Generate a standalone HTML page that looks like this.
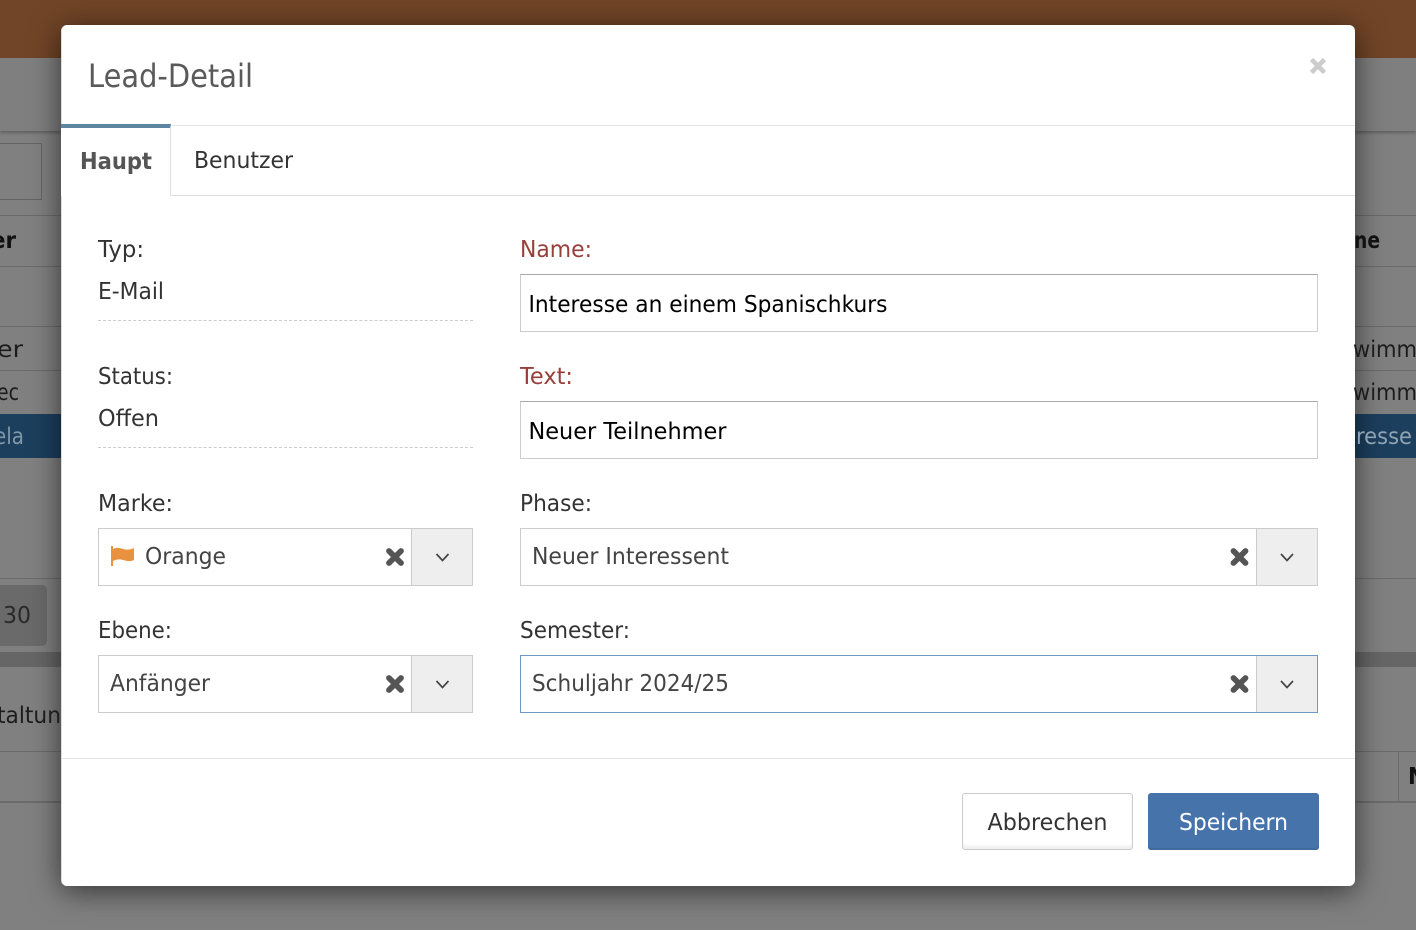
<!DOCTYPE html>
<html lang="de">
<head>
<meta charset="utf-8">
<title>Lead-Detail</title>
<style>
html,body{margin:0;padding:0;width:1416px;height:930px;overflow:hidden;background:#808080}
body{position:relative;font-family:"DejaVu Sans","Liberation Sans",sans-serif}
.a{position:absolute;box-sizing:border-box}
.bgl{position:absolute;height:1px;background:#6b6b6b}
#modal{left:61px;top:25px;width:1294px;height:861px;background:#fff;border-radius:6px;box-shadow:0 5px 30px rgba(0,0,0,.6);border-left:1px solid #ddd}
.in{background:#fff;border:1px solid #ccc;border-top-color:#a9a9a9}
.sel{background:#fff;border:1px solid #ccc}
.arr{background:#eee;border-left:1px solid #ccc}
svg#t{position:absolute;left:0;top:0}
svg#t text{font-family:"DejaVu Sans","Liberation Sans",sans-serif;font-size:23.5px;fill:#333;dominant-baseline:alphabetic}
</style>
</head>
<body>
<div class="a" style="left:0;top:0;width:1416px;height:58px;background:#714527"></div>
<div class="a" style="left:0;top:58px;width:1416px;height:73px;background:#7f7f7f;box-shadow:0 2px 3px rgba(0,0,0,.25)"></div>
<div class="a" style="left:-5px;top:143px;width:47px;height:57px;border:1px solid #646464"></div>
<div class="bgl" style="left:0;top:215px;width:1416px"></div>
<div class="bgl" style="left:0;top:266px;width:1416px"></div>
<div class="bgl" style="left:0;top:326px;width:1416px"></div>
<div class="bgl" style="left:0;top:370px;width:1416px"></div>
<div class="a" style="left:0;top:414px;width:1416px;height:44px;background:#1c3f5e"></div>
<div class="bgl" style="left:0;top:578px;width:1416px"></div>
<div class="a" style="left:-8px;top:585px;width:55px;height:61px;background:#6a6a6a;border-radius:5px"></div>
<div class="a" style="left:0;top:652px;width:1416px;height:15px;background:#666"></div>
<div class="bgl" style="left:0;top:751px;width:1416px"></div>
<div class="a" style="left:0;top:801px;width:1416px;height:2px;background:#6b6b6b"></div>
<div class="a" style="left:1398px;top:751px;width:1px;height:50px;background:#6b6b6b"></div>

<div class="a" id="modal"></div>

<div class="a" style="left:62px;top:125px;width:1293px;height:1px;background:#e5e5e5"></div>
<div class="a" style="left:62px;top:195px;width:1293px;height:1px;background:#ddd"></div>
<div class="a" style="left:61px;top:124px;width:110px;height:72px;background:#fff;border-top:4px solid #5d87a0;border-right:1px solid #ddd"></div>
<div class="a" style="left:62px;top:758px;width:1293px;height:1px;background:#e5e5e5"></div>

<div class="a" style="left:98px;top:320px;width:375px;border-top:1px dashed #ccc"></div>
<div class="a" style="left:98px;top:447px;width:375px;border-top:1px dashed #ccc"></div>

<div class="a in" style="left:520px;top:274px;width:798px;height:58px"></div>
<div class="a in" style="left:520px;top:401px;width:798px;height:58px"></div>

<div class="a sel" style="left:98px;top:528px;width:375px;height:58px"></div>
<div class="a arr" style="left:411px;top:529px;width:61px;height:56px"></div>
<div class="a sel" style="left:98px;top:655px;width:375px;height:58px"></div>
<div class="a arr" style="left:411px;top:656px;width:61px;height:56px"></div>
<div class="a sel" style="left:520px;top:528px;width:798px;height:58px"></div>
<div class="a arr" style="left:1256px;top:529px;width:61px;height:56px"></div>
<div class="a sel" style="left:520px;top:655px;width:798px;height:58px;border-color:#6b9ac4"></div>
<div class="a arr" style="left:1256px;top:656px;width:61px;height:56px"></div>

<div class="a" style="left:962px;top:793px;width:171px;height:57px;background:#fff;border:1px solid #ccc;border-radius:3px;box-shadow:inset 0 -4px 3px -1px #eee"></div>
<div class="a" style="left:1148px;top:793px;width:171px;height:57px;background:#4673a9;border-radius:3px;box-shadow:inset 0 -2px 0 #3f6a9e"></div>

<svg id="t" width="1416" height="930" viewBox="0 0 1416 930" xmlns="http://www.w3.org/2000/svg">
  <!-- background text -->
  <g>
    <text x="-9" y="248" textLength="25" lengthAdjust="spacingAndGlyphs" style="fill:#111;font-weight:bold">er</text>
    <text x="-3" y="357" textLength="26" lengthAdjust="spacingAndGlyphs" style="fill:#1c1c1c">er</text>
    <text x="-3" y="400" textLength="22" lengthAdjust="spacingAndGlyphs" style="fill:#1c1c1c">ec</text>
    <text x="-6" y="444" textLength="30" lengthAdjust="spacingAndGlyphs" style="fill:#7f97a8">ela</text>
    <text x="3" y="623" textLength="28" lengthAdjust="spacingAndGlyphs" style="fill:#2a2a2a">30</text>
    <text x="-3" y="723" textLength="64" lengthAdjust="spacingAndGlyphs" style="fill:#1c1c1c">taltun</text>
    <text x="1354" y="248" textLength="26" lengthAdjust="spacingAndGlyphs" style="fill:#111;font-weight:bold">ne</text>
    <text x="1353" y="357" textLength="64" lengthAdjust="spacingAndGlyphs" style="fill:#1c1c1c">wimm</text>
    <text x="1353" y="400" textLength="64" lengthAdjust="spacingAndGlyphs" style="fill:#1c1c1c">wimm</text>
    <text x="1356" y="444" textLength="56" lengthAdjust="spacingAndGlyphs" style="fill:#8fa3b3">resse</text>
    <text x="1408" y="784" textLength="18" lengthAdjust="spacingAndGlyphs" style="fill:#111;font-weight:bold">N</text>
  </g>

  <!-- modal text -->
  <text x="88" y="87" textLength="165" lengthAdjust="spacingAndGlyphs" style="font-size:32px;fill:#5a5a5a">Lead-Detail</text>
  <path d="M1311.500 59.500L1324.500 72.500M1324.500 59.500L1311.500 72.500" stroke="#ccc" stroke-width="4.6" fill="none"/>

  <text x="80" y="169" textLength="72" lengthAdjust="spacingAndGlyphs" style="font-weight:bold;fill:#555">Haupt</text>
  <text x="194" y="168" textLength="99" lengthAdjust="spacingAndGlyphs">Benutzer</text>

  <text x="98" y="257" textLength="46" lengthAdjust="spacingAndGlyphs">Typ:</text>
  <text x="98" y="299" textLength="66" lengthAdjust="spacingAndGlyphs">E-Mail</text>
  <text x="98" y="384" textLength="75" lengthAdjust="spacingAndGlyphs">Status:</text>
  <text x="98" y="426" textLength="61" lengthAdjust="spacingAndGlyphs">Offen</text>
  <text x="98" y="511" textLength="75" lengthAdjust="spacingAndGlyphs">Marke:</text>
  <text x="98" y="638" textLength="74" lengthAdjust="spacingAndGlyphs">Ebene:</text>

  <text x="520" y="257" textLength="72" lengthAdjust="spacingAndGlyphs" style="fill:#973f3a">Name:</text>
  <text x="520" y="384" textLength="53" lengthAdjust="spacingAndGlyphs" style="fill:#973f3a">Text:</text>
  <text x="520" y="511" textLength="72" lengthAdjust="spacingAndGlyphs">Phase:</text>
  <text x="520" y="638" textLength="110" lengthAdjust="spacingAndGlyphs">Semester:</text>

  <text x="528.500" y="312" textLength="359" lengthAdjust="spacingAndGlyphs" style="fill:#000">Interesse an einem Spanischkurs</text>
  <text x="528.500" y="439" textLength="198" lengthAdjust="spacingAndGlyphs" style="fill:#000">Neuer Teilnehmer</text>

  <text x="145" y="564" textLength="81" lengthAdjust="spacingAndGlyphs" style="fill:#444">Orange</text>
  <text x="110" y="691" textLength="100" lengthAdjust="spacingAndGlyphs" style="fill:#444">Anfänger</text>
  <text x="532" y="564" textLength="197" lengthAdjust="spacingAndGlyphs" style="fill:#444">Neuer Interessent</text>
  <text x="532" y="691" textLength="197" lengthAdjust="spacingAndGlyphs" style="fill:#444">Schuljahr 2024/25</text>

  <text x="987.500" y="830" textLength="120" lengthAdjust="spacingAndGlyphs">Abbrechen</text>
  <text x="1179" y="830" textLength="109" lengthAdjust="spacingAndGlyphs" style="fill:#fff">Speichern</text>

  <!-- flag -->
  <rect x="111" y="546" width="2" height="20" fill="#e8913f"/>
  <path d="M113 549C117 547 120 548 123 549C127 550 130 550 134 548V560C130 562 127 561 123 560C120 559 117 559 113 561Z" fill="#e8913f"/>

  <!-- clear icons -->
  <g stroke="#555" stroke-width="5.8" stroke-linecap="round" fill="none">
    <path d="M389 551L401 563M401 551L389 563"/>
    <path d="M389 678L401 690M401 678L389 690"/>
    <path d="M1233.500 551L1245.500 563M1245.500 551L1233.500 563"/>
    <path d="M1233.500 678L1245.500 690M1245.500 678L1233.500 690"/>
  </g>

  <!-- chevrons -->
  <g stroke="#444" stroke-width="1.7" fill="none">
    <path d="M436.500 554L442.500 560.500L448.500 554"/>
    <path d="M436.500 681L442.500 687.500L448.500 681"/>
    <path d="M1281 554L1287 560.500L1293 554"/>
    <path d="M1281 681L1287 687.500L1293 681"/>
  </g>
</svg>
</body>
</html>
